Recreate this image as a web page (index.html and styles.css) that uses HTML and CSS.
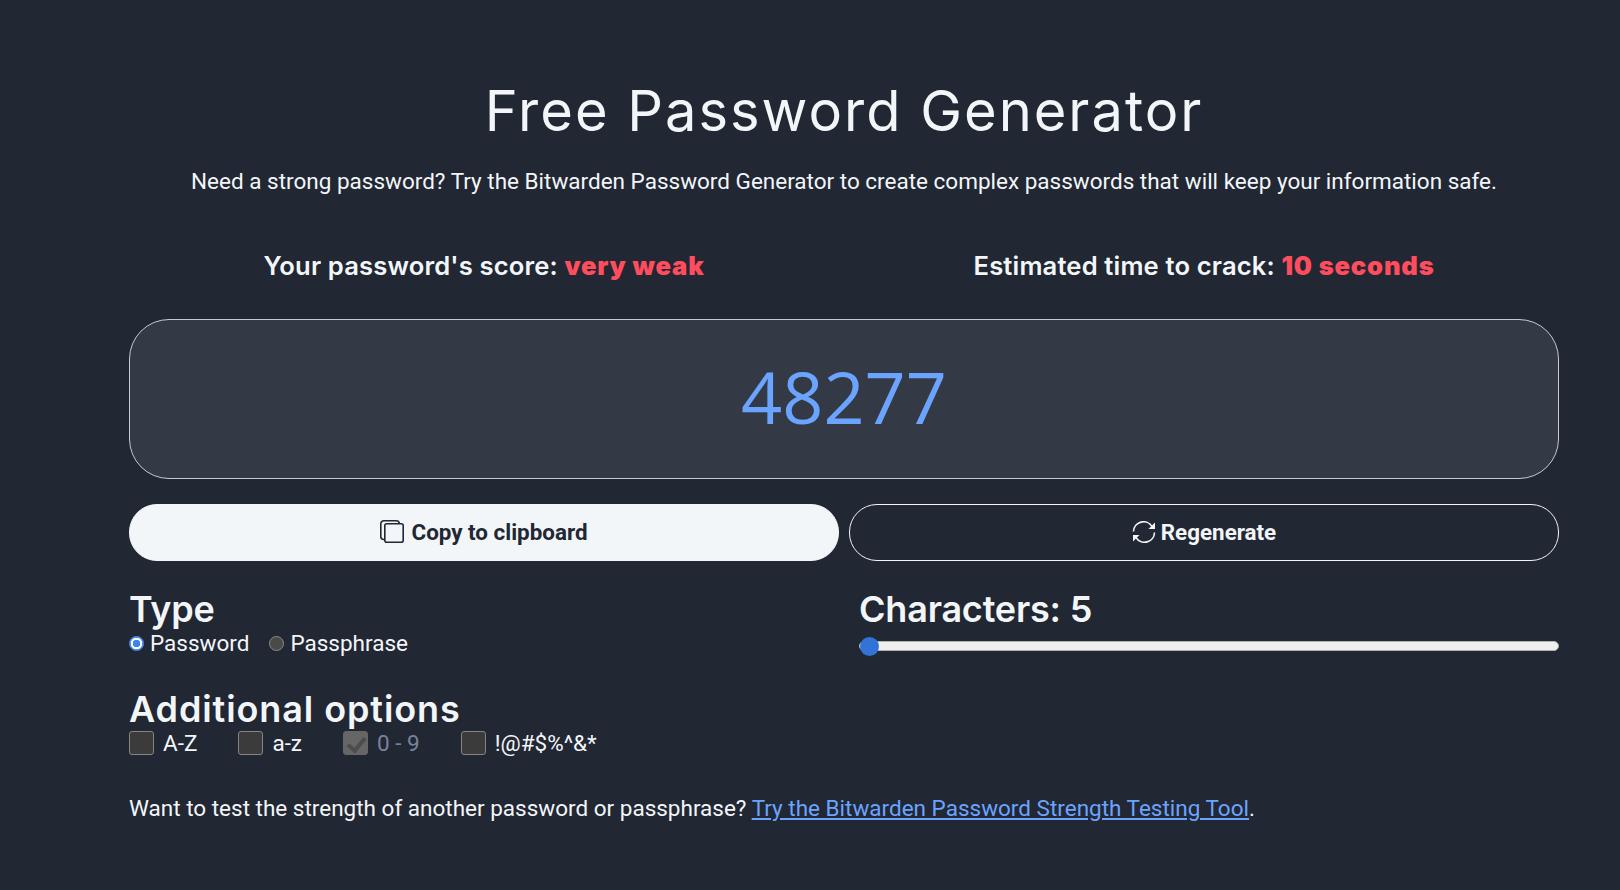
FILE: index.html
```html
<!DOCTYPE html>
<html lang="en">
<head>
    <meta charset="UTF-8">
    <title>Free Password Generator</title>
    <link rel="stylesheet" href="styles.css">
</head>
<body>
<main class="page">
    <h1>Free Password Generator</h1>
    <p class="intro">Need a strong password? Try the Bitwarden Password Generator to create complex passwords that will keep your information safe.</p>

    <div class="scores">
        <div class="score">Your password's score: <b>very weak</b></div>
        <div class="score">Estimated time to crack: <b>10 seconds</b></div>
    </div>

    <div class="result">48277</div>

    <div class="actions">
        <button class="btn btn-copy">
            <svg class="icon" viewBox="0 0 24 23" fill="none" stroke="currentColor" stroke-width="1.6">
                <rect x="4.8" y="3.8" width="18.4" height="18.4" rx="2"/>
                <path d="M4.8 19.5h-1a3 3 0 0 1-3-3V3.8a3 3 0 0 1 3-3h12.5a3 3 0 0 1 3 3"/>
            </svg>
            Copy to clipboard
        </button>
        <button class="btn btn-regen">
            <svg class="icon icon-regen" viewBox="0 0 24 22" fill="none" stroke="currentColor" stroke-width="1.6">
                <path d="M1.5 10.5a10 10 0 0 1 18.5-5"/>
                <path d="M22.5 11.5a10 10 0 0 1-18.5 5"/>
                <path d="M23 1.5v6.5h-6.5z" fill="currentColor" stroke="none"/>
                <path d="M1 20.5v-6.5h6.5z" fill="currentColor" stroke="none"/>
            </svg>
            Regenerate
        </button>
    </div>

    <div class="settings">
        <section>
            <h2>Type</h2>
            <div class="radios">
                <label><input type="radio" name="type" checked>Password</label>
                <label><input type="radio" name="type">Passphrase</label>
            </div>
        </section>
        <section class="length">
            <h2>Characters: 5</h2>
            <input class="slider" type="range" min="5" max="128" value="5">
        </section>
    </div>

    <section class="options">
        <h2>Additional options</h2>
        <div class="checks">
            <label><input type="checkbox">A-Z</label>
            <label><input type="checkbox">a-z</label>
            <label class="off"><input type="checkbox" checked disabled>0 - 9</label>
            <label><input type="checkbox">!@#$%^&amp;*</label>
        </div>
    </section>

    <p class="outro">Want to test the strength of another password or passphrase? <a href="#">Try the Bitwarden Password Strength Testing Tool</a>.</p>
</main>
</body>
</html>
```

FILE: styles.css
```css
body {
    margin: 0;
    background: #212733;
    color: #f3f6f9;
    font-family: Roboto, Arial, sans-serif;
}

.page {
    width: 1430px;
    margin-left: 129px;
    padding-top: 73px;
}

h1 {
    margin: 0;
    text-align: center;
    font-family: Inter, sans-serif;
    font-size: 56px;
    font-weight: 400;
    letter-spacing: 2px;
    line-height: 76px;
}

.intro {
    margin: 16px 0 0;
    text-align: center;
    font-size: 22.5px;
    line-height: 32px;
}

.scores {
    display: grid;
    grid-template-columns: 1fr 1fr;
    gap: 10px;
    margin-top: 51px;
}

.score {
    text-align: center;
    font-family: Inter, sans-serif;
    font-size: 25.6px;
    font-weight: 600;
    letter-spacing: 0.15px;
    line-height: 36px;
}

.score b {
    color: #ff4d5e;
    font-weight: 900;
    letter-spacing: 0.8px;
}

.result {
    box-sizing: border-box;
    height: 160px;
    margin-top: 35px;
    border: 1px solid #c5cad3;
    border-radius: 40px;
    background: #333945;
    color: #6ba4ff;
    text-align: center;
    font-family: "Open Sans", sans-serif;
    font-size: 72px;
    line-height: 152px;
}

.actions {
    display: grid;
    grid-template-columns: 1fr 1fr;
    gap: 10px;
    margin-top: 25px;
}

.btn {
    display: flex;
    align-items: center;
    justify-content: center;
    gap: 7px;
    height: 57px;
    padding-bottom: 3px;
    border: 1px solid #f3f6f9;
    border-radius: 28px;
    font-family: Roboto, Arial, sans-serif;
    font-size: 22.4px;
    font-weight: 700;
    cursor: pointer;
}

.btn-copy {
    background: #f3f6f9;
    color: #212733;
}

.btn-regen {
    gap: 5px;
    background: #212733;
    color: #f3f6f9;
}

.icon {
    width: 24px;
    height: 23px;
}

.icon-regen {
    height: 22px;
}

.settings {
    display: grid;
    grid-template-columns: 1fr 1fr;
    gap: 10px;
    margin-top: 28px;
}

h2 {
    margin: 0;
    font-family: Inter, sans-serif;
    font-size: 36px;
    font-weight: 600;
    letter-spacing: -0.2px;
    line-height: 40px;
}

.length {
    padding-left: 10px;
}

.radios,
.checks {
    display: flex;
    font-size: 22.5px;
}

.radios {
    gap: 20px;
    line-height: 28px;
}

.radios label,
.checks label {
    display: flex;
    align-items: center;
}

.radios input {
    appearance: none;
    box-sizing: border-box;
    width: 15px;
    height: 15px;
    margin: 0 6px 0 0;
    border: 1px solid #8a8a8a;
    border-radius: 50%;
    background: #4a4a4a;
}

.radios input:checked {
    border: 1px solid #4f8ff0;
    background: radial-gradient(circle, #3f83ec 0 3.5px, #fff 4px 5.5px, #4f8ff0 6px);
}

.slider {
    display: block;
    width: 100%;
    height: 20px;
    margin: 7px 0 0;
    appearance: none;
    background: transparent;
}

.slider::-webkit-slider-runnable-track {
    height: 10px;
    box-sizing: border-box;
    border: 1px solid #b2b2b2;
    border-radius: 5px;
    background: #efefef;
}

.slider::-webkit-slider-thumb {
    appearance: none;
    width: 19px;
    height: 19px;
    margin-top: -5.5px;
    border: none;
    border-radius: 50%;
    background: #3273d8;
}

.options {
    margin-top: 32px;
}

.options h2 {
    margin-bottom: 2px;
    letter-spacing: 0.9px;
}

.checks {
    gap: 41px;
    line-height: 24px;
}

.checks input {
    appearance: none;
    box-sizing: border-box;
    position: relative;
    width: 25px;
    height: 24px;
    margin: 0 9px 0 0;
    border: 1px solid #858585;
    border-radius: 3px;
    background: #3b3b3b;
}

.checks input:checked {
    border-color: #666;
    background: #666;
}

/* the tick */
.checks input:checked::after {
    content: "";
    position: absolute;
    left: 7px;
    top: 2px;
    width: 7px;
    height: 14px;
    border: solid #4d4d4d;
    border-width: 0 4px 4px 0;
    transform: rotate(40deg);
}

.off {
    color: #78839a;
}

.outro {
    margin: 37px 0 0;
    font-size: 22.5px;
    line-height: 32px;
}

.outro a {
    color: #6ba4ff;
}
```
